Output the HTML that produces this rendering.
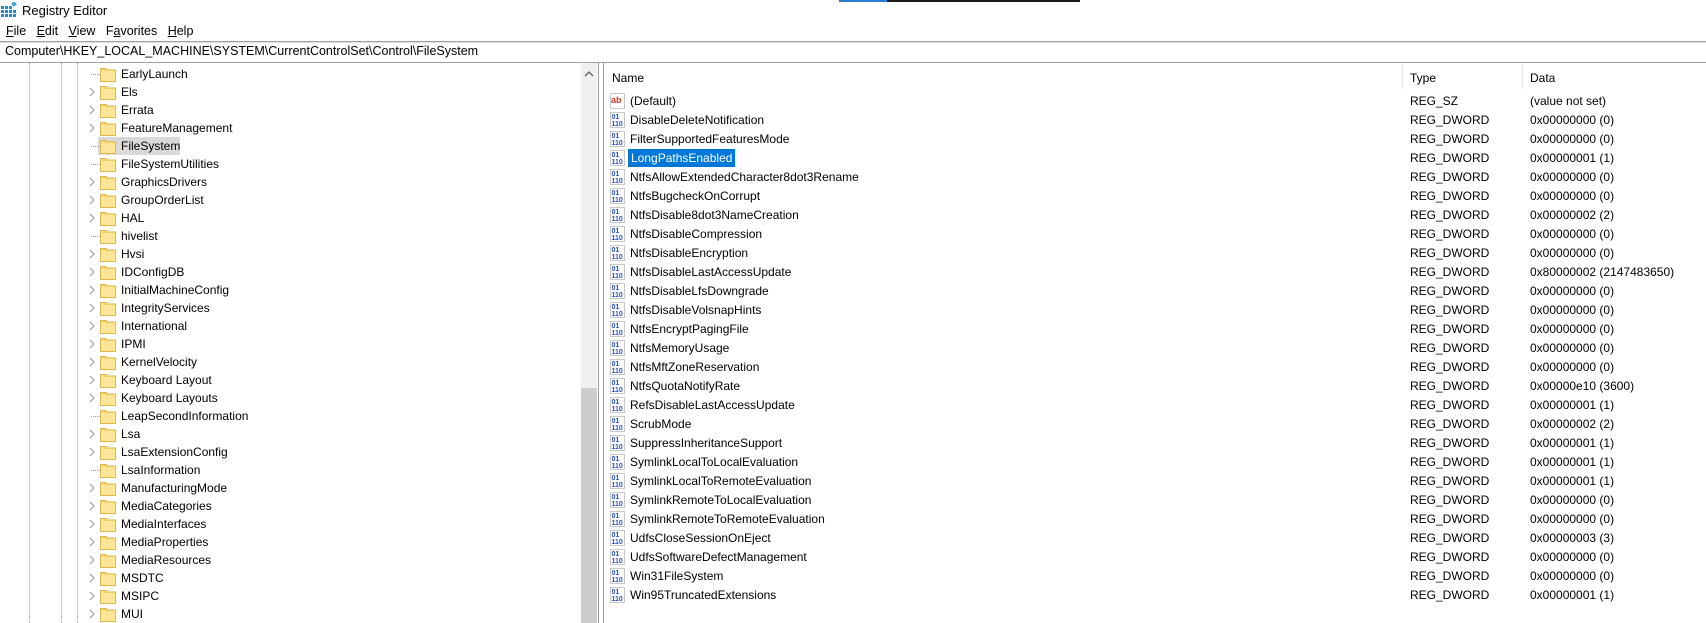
<!DOCTYPE html>
<html><head><meta charset="utf-8"><style>
*{margin:0;padding:0;box-sizing:border-box}
body{width:1706px;height:623px;background:#fff;font-family:"Liberation Sans",sans-serif;font-size:12px;color:#000;position:relative;overflow:hidden}
.a{position:absolute;white-space:nowrap}
.t{position:absolute;left:0;height:18px;width:580px}
.t span{position:absolute;left:121px;top:2px}
.t svg.f{position:absolute;left:100px;top:1px}
.t .ch{position:absolute;left:88px;top:4px}
.t .dt{position:absolute;left:91px;top:9px;width:9px;border-top:1px dotted #a0a0a0}
.r{position:absolute;left:604px;height:19px;width:1102px}
.r svg{position:absolute;left:6px;top:2px}
.r .n{position:absolute;left:24px;top:3px;padding:0 2px}
.r .ty{position:absolute;left:806px;top:3px}
.r .d{position:absolute;left:926px;top:3px}
.vl{position:absolute;top:63px;height:560px;border-left:1px dotted #a0a0a0}
</style></head><body>
<div class="a" style="left:839px;top:0;width:48px;height:2px;background:#2b7cd3"></div>
<div class="a" style="left:887px;top:0;width:193px;height:2px;background:#1a1a1a"></div>
<svg class="a" style="left:1px;top:2px" width="16" height="16" viewBox="0 0 16 16"><g fill="#1e88d6"><rect x="0" y="4" width="3" height="3"/><rect x="4" y="4" width="3" height="3"/><rect x="8" y="4" width="3" height="3"/><rect x="0" y="8" width="3" height="3"/><rect x="4" y="8" width="3" height="3"/><rect x="8" y="8" width="3" height="3"/><rect x="0" y="12" width="3" height="3"/><rect x="4" y="12" width="3" height="3"/><rect x="8" y="12" width="3" height="3"/><rect x="12" y="12" width="3" height="3"/><rect x="12" y="8" width="3" height="3"/></g><rect x="11" y="0" width="4" height="4" fill="#3aa0e8" transform="rotate(45 13 2)"/></svg>
<div class="a" style="left:22px;top:3px;font-size:13px">Registry Editor</div>
<div class="a" style="left:6px;top:24px;font-size:12.5px"><u>F</u>ile&nbsp;&nbsp;&nbsp;<u>E</u>dit&nbsp;&nbsp;&nbsp;<u>V</u>iew&nbsp;&nbsp;&nbsp;F<u>a</u>vorites&nbsp;&nbsp;&nbsp;<u>H</u>elp</div>
<div class="a" style="left:0;top:41px;width:1706px;height:2px;background:#e0e0e0;border-top:1px solid #a0a0a0"></div>
<div class="a" style="left:5px;top:44px;font-size:12.5px">Computer\HKEY_LOCAL_MACHINE\SYSTEM\CurrentControlSet\Control\FileSystem</div>
<div class="a" style="left:0;top:62px;width:1706px;height:1px;background:#a0a0a0"></div>
<div class="vl" style="left:29px"></div><div class="vl" style="left:61px"></div><div class="vl" style="left:77px"></div>
<div class="a" style="left:581px;top:63px;width:16px;height:560px;background:#f0f0f0"></div>
<div class="a" style="left:581px;top:388px;width:16px;height:235px;background:#cdcdcd"></div>
<svg class="a" style="left:584px;top:70px" width="10" height="8"><path d="M1 6 L5 2 L9 6" fill="none" stroke="#606060" stroke-width="1.3"/></svg>
<div class="a" style="left:598px;top:63px;width:1px;height:560px;background:#a0a0a0"></div>
<div class="a" style="left:603px;top:63px;width:1px;height:560px;background:#a0a0a0"></div>
<svg width="0" height="0" style="position:absolute"><defs>
<g id="fo"><path d="M0.5 2.5 H6 L7.5 4 H15.5 V15.5 H0.5 Z" fill="#f8d775" stroke="#e0b84a"/><rect x="1" y="5" width="14" height="10" fill="#fde59a"/></g>
<path id="cv" d="M2 1 L6 5 L2 9" fill="none" stroke="#a0a0a0" stroke-width="1.2"/>
<g id="bi"><rect x="0.5" y="0.5" width="14" height="15" fill="#fff" stroke="#c8c8c8"/><text x="1.5" y="7" font-size="7" font-weight="bold" fill="#2a52be" font-family="Liberation Sans">01</text><text x="1.5" y="14" font-size="7" font-weight="bold" fill="#2a52be" font-family="Liberation Sans">110</text></g>
</defs></svg>
<div class="a" style="left:98px;top:137px;width:82px;height:18px;background:#d9d9d9"></div>
<div class="t" style="top:65px"><div class="dt"></div><svg class="f" width="16" height="16"><use href="#fo"/></svg><span>EarlyLaunch</span></div>
<div class="t" style="top:83px"><svg class="ch" width="8" height="10"><use href="#cv"/></svg><svg class="f" width="16" height="16"><use href="#fo"/></svg><span>Els</span></div>
<div class="t" style="top:101px"><svg class="ch" width="8" height="10"><use href="#cv"/></svg><svg class="f" width="16" height="16"><use href="#fo"/></svg><span>Errata</span></div>
<div class="t" style="top:119px"><svg class="ch" width="8" height="10"><use href="#cv"/></svg><svg class="f" width="16" height="16"><use href="#fo"/></svg><span>FeatureManagement</span></div>
<div class="t" style="top:137px"><div class="dt"></div><svg class="f" width="16" height="16"><use href="#fo"/></svg><span>FileSystem</span></div>
<div class="t" style="top:155px"><div class="dt"></div><svg class="f" width="16" height="16"><use href="#fo"/></svg><span>FileSystemUtilities</span></div>
<div class="t" style="top:173px"><svg class="ch" width="8" height="10"><use href="#cv"/></svg><svg class="f" width="16" height="16"><use href="#fo"/></svg><span>GraphicsDrivers</span></div>
<div class="t" style="top:191px"><svg class="ch" width="8" height="10"><use href="#cv"/></svg><svg class="f" width="16" height="16"><use href="#fo"/></svg><span>GroupOrderList</span></div>
<div class="t" style="top:209px"><svg class="ch" width="8" height="10"><use href="#cv"/></svg><svg class="f" width="16" height="16"><use href="#fo"/></svg><span>HAL</span></div>
<div class="t" style="top:227px"><div class="dt"></div><svg class="f" width="16" height="16"><use href="#fo"/></svg><span>hivelist</span></div>
<div class="t" style="top:245px"><svg class="ch" width="8" height="10"><use href="#cv"/></svg><svg class="f" width="16" height="16"><use href="#fo"/></svg><span>Hvsi</span></div>
<div class="t" style="top:263px"><svg class="ch" width="8" height="10"><use href="#cv"/></svg><svg class="f" width="16" height="16"><use href="#fo"/></svg><span>IDConfigDB</span></div>
<div class="t" style="top:281px"><svg class="ch" width="8" height="10"><use href="#cv"/></svg><svg class="f" width="16" height="16"><use href="#fo"/></svg><span>InitialMachineConfig</span></div>
<div class="t" style="top:299px"><svg class="ch" width="8" height="10"><use href="#cv"/></svg><svg class="f" width="16" height="16"><use href="#fo"/></svg><span>IntegrityServices</span></div>
<div class="t" style="top:317px"><svg class="ch" width="8" height="10"><use href="#cv"/></svg><svg class="f" width="16" height="16"><use href="#fo"/></svg><span>International</span></div>
<div class="t" style="top:335px"><svg class="ch" width="8" height="10"><use href="#cv"/></svg><svg class="f" width="16" height="16"><use href="#fo"/></svg><span>IPMI</span></div>
<div class="t" style="top:353px"><svg class="ch" width="8" height="10"><use href="#cv"/></svg><svg class="f" width="16" height="16"><use href="#fo"/></svg><span>KernelVelocity</span></div>
<div class="t" style="top:371px"><svg class="ch" width="8" height="10"><use href="#cv"/></svg><svg class="f" width="16" height="16"><use href="#fo"/></svg><span>Keyboard Layout</span></div>
<div class="t" style="top:389px"><svg class="ch" width="8" height="10"><use href="#cv"/></svg><svg class="f" width="16" height="16"><use href="#fo"/></svg><span>Keyboard Layouts</span></div>
<div class="t" style="top:407px"><div class="dt"></div><svg class="f" width="16" height="16"><use href="#fo"/></svg><span>LeapSecondInformation</span></div>
<div class="t" style="top:425px"><svg class="ch" width="8" height="10"><use href="#cv"/></svg><svg class="f" width="16" height="16"><use href="#fo"/></svg><span>Lsa</span></div>
<div class="t" style="top:443px"><svg class="ch" width="8" height="10"><use href="#cv"/></svg><svg class="f" width="16" height="16"><use href="#fo"/></svg><span>LsaExtensionConfig</span></div>
<div class="t" style="top:461px"><div class="dt"></div><svg class="f" width="16" height="16"><use href="#fo"/></svg><span>LsaInformation</span></div>
<div class="t" style="top:479px"><svg class="ch" width="8" height="10"><use href="#cv"/></svg><svg class="f" width="16" height="16"><use href="#fo"/></svg><span>ManufacturingMode</span></div>
<div class="t" style="top:497px"><svg class="ch" width="8" height="10"><use href="#cv"/></svg><svg class="f" width="16" height="16"><use href="#fo"/></svg><span>MediaCategories</span></div>
<div class="t" style="top:515px"><svg class="ch" width="8" height="10"><use href="#cv"/></svg><svg class="f" width="16" height="16"><use href="#fo"/></svg><span>MediaInterfaces</span></div>
<div class="t" style="top:533px"><svg class="ch" width="8" height="10"><use href="#cv"/></svg><svg class="f" width="16" height="16"><use href="#fo"/></svg><span>MediaProperties</span></div>
<div class="t" style="top:551px"><svg class="ch" width="8" height="10"><use href="#cv"/></svg><svg class="f" width="16" height="16"><use href="#fo"/></svg><span>MediaResources</span></div>
<div class="t" style="top:569px"><svg class="ch" width="8" height="10"><use href="#cv"/></svg><svg class="f" width="16" height="16"><use href="#fo"/></svg><span>MSDTC</span></div>
<div class="t" style="top:587px"><svg class="ch" width="8" height="10"><use href="#cv"/></svg><svg class="f" width="16" height="16"><use href="#fo"/></svg><span>MSIPC</span></div>
<div class="t" style="top:605px"><svg class="ch" width="8" height="10"><use href="#cv"/></svg><svg class="f" width="16" height="16"><use href="#fo"/></svg><span>MUI</span></div>

<div class="a" style="left:612px;top:71px">Name</div>
<div class="a" style="left:1402px;top:65px;width:1px;height:24px;background:#e5e5e5"></div>
<div class="a" style="left:1410px;top:71px">Type</div>
<div class="a" style="left:1522px;top:65px;width:1px;height:24px;background:#e5e5e5"></div>
<div class="a" style="left:1530px;top:71px">Data</div>

<div class="r" style="top:91px"><svg width="16" height="16"><rect x="0.5" y="0.5" width="14" height="15" fill="#fff" stroke="#c8c8c8"/><text x="1" y="10" font-size="9" font-weight="bold" fill="#c8402a" font-family="Liberation Sans">ab</text></svg><span class="n">(Default)</span><span class="ty">REG_SZ</span><span class="d">(value not set)</span></div>
<div class="r" style="top:110px"><svg width="16" height="16"><use href="#bi"/></svg><span class="n">DisableDeleteNotification</span><span class="ty">REG_DWORD</span><span class="d">0x00000000 (0)</span></div>
<div class="r" style="top:129px"><svg width="16" height="16"><use href="#bi"/></svg><span class="n">FilterSupportedFeaturesMode</span><span class="ty">REG_DWORD</span><span class="d">0x00000000 (0)</span></div>
<div class="r" style="top:148px"><svg width="16" height="16"><use href="#bi"/></svg><span class="n" style="background:#0078d7;color:#fff;top:1px;padding:2px 3px">LongPathsEnabled</span><span class="ty">REG_DWORD</span><span class="d">0x00000001 (1)</span></div>
<div class="r" style="top:167px"><svg width="16" height="16"><use href="#bi"/></svg><span class="n">NtfsAllowExtendedCharacter8dot3Rename</span><span class="ty">REG_DWORD</span><span class="d">0x00000000 (0)</span></div>
<div class="r" style="top:186px"><svg width="16" height="16"><use href="#bi"/></svg><span class="n">NtfsBugcheckOnCorrupt</span><span class="ty">REG_DWORD</span><span class="d">0x00000000 (0)</span></div>
<div class="r" style="top:205px"><svg width="16" height="16"><use href="#bi"/></svg><span class="n">NtfsDisable8dot3NameCreation</span><span class="ty">REG_DWORD</span><span class="d">0x00000002 (2)</span></div>
<div class="r" style="top:224px"><svg width="16" height="16"><use href="#bi"/></svg><span class="n">NtfsDisableCompression</span><span class="ty">REG_DWORD</span><span class="d">0x00000000 (0)</span></div>
<div class="r" style="top:243px"><svg width="16" height="16"><use href="#bi"/></svg><span class="n">NtfsDisableEncryption</span><span class="ty">REG_DWORD</span><span class="d">0x00000000 (0)</span></div>
<div class="r" style="top:262px"><svg width="16" height="16"><use href="#bi"/></svg><span class="n">NtfsDisableLastAccessUpdate</span><span class="ty">REG_DWORD</span><span class="d">0x80000002 (2147483650)</span></div>
<div class="r" style="top:281px"><svg width="16" height="16"><use href="#bi"/></svg><span class="n">NtfsDisableLfsDowngrade</span><span class="ty">REG_DWORD</span><span class="d">0x00000000 (0)</span></div>
<div class="r" style="top:300px"><svg width="16" height="16"><use href="#bi"/></svg><span class="n">NtfsDisableVolsnapHints</span><span class="ty">REG_DWORD</span><span class="d">0x00000000 (0)</span></div>
<div class="r" style="top:319px"><svg width="16" height="16"><use href="#bi"/></svg><span class="n">NtfsEncryptPagingFile</span><span class="ty">REG_DWORD</span><span class="d">0x00000000 (0)</span></div>
<div class="r" style="top:338px"><svg width="16" height="16"><use href="#bi"/></svg><span class="n">NtfsMemoryUsage</span><span class="ty">REG_DWORD</span><span class="d">0x00000000 (0)</span></div>
<div class="r" style="top:357px"><svg width="16" height="16"><use href="#bi"/></svg><span class="n">NtfsMftZoneReservation</span><span class="ty">REG_DWORD</span><span class="d">0x00000000 (0)</span></div>
<div class="r" style="top:376px"><svg width="16" height="16"><use href="#bi"/></svg><span class="n">NtfsQuotaNotifyRate</span><span class="ty">REG_DWORD</span><span class="d">0x00000e10 (3600)</span></div>
<div class="r" style="top:395px"><svg width="16" height="16"><use href="#bi"/></svg><span class="n">RefsDisableLastAccessUpdate</span><span class="ty">REG_DWORD</span><span class="d">0x00000001 (1)</span></div>
<div class="r" style="top:414px"><svg width="16" height="16"><use href="#bi"/></svg><span class="n">ScrubMode</span><span class="ty">REG_DWORD</span><span class="d">0x00000002 (2)</span></div>
<div class="r" style="top:433px"><svg width="16" height="16"><use href="#bi"/></svg><span class="n">SuppressInheritanceSupport</span><span class="ty">REG_DWORD</span><span class="d">0x00000001 (1)</span></div>
<div class="r" style="top:452px"><svg width="16" height="16"><use href="#bi"/></svg><span class="n">SymlinkLocalToLocalEvaluation</span><span class="ty">REG_DWORD</span><span class="d">0x00000001 (1)</span></div>
<div class="r" style="top:471px"><svg width="16" height="16"><use href="#bi"/></svg><span class="n">SymlinkLocalToRemoteEvaluation</span><span class="ty">REG_DWORD</span><span class="d">0x00000001 (1)</span></div>
<div class="r" style="top:490px"><svg width="16" height="16"><use href="#bi"/></svg><span class="n">SymlinkRemoteToLocalEvaluation</span><span class="ty">REG_DWORD</span><span class="d">0x00000000 (0)</span></div>
<div class="r" style="top:509px"><svg width="16" height="16"><use href="#bi"/></svg><span class="n">SymlinkRemoteToRemoteEvaluation</span><span class="ty">REG_DWORD</span><span class="d">0x00000000 (0)</span></div>
<div class="r" style="top:528px"><svg width="16" height="16"><use href="#bi"/></svg><span class="n">UdfsCloseSessionOnEject</span><span class="ty">REG_DWORD</span><span class="d">0x00000003 (3)</span></div>
<div class="r" style="top:547px"><svg width="16" height="16"><use href="#bi"/></svg><span class="n">UdfsSoftwareDefectManagement</span><span class="ty">REG_DWORD</span><span class="d">0x00000000 (0)</span></div>
<div class="r" style="top:566px"><svg width="16" height="16"><use href="#bi"/></svg><span class="n">Win31FileSystem</span><span class="ty">REG_DWORD</span><span class="d">0x00000000 (0)</span></div>
<div class="r" style="top:585px"><svg width="16" height="16"><use href="#bi"/></svg><span class="n">Win95TruncatedExtensions</span><span class="ty">REG_DWORD</span><span class="d">0x00000001 (1)</span></div>
</body></html>
